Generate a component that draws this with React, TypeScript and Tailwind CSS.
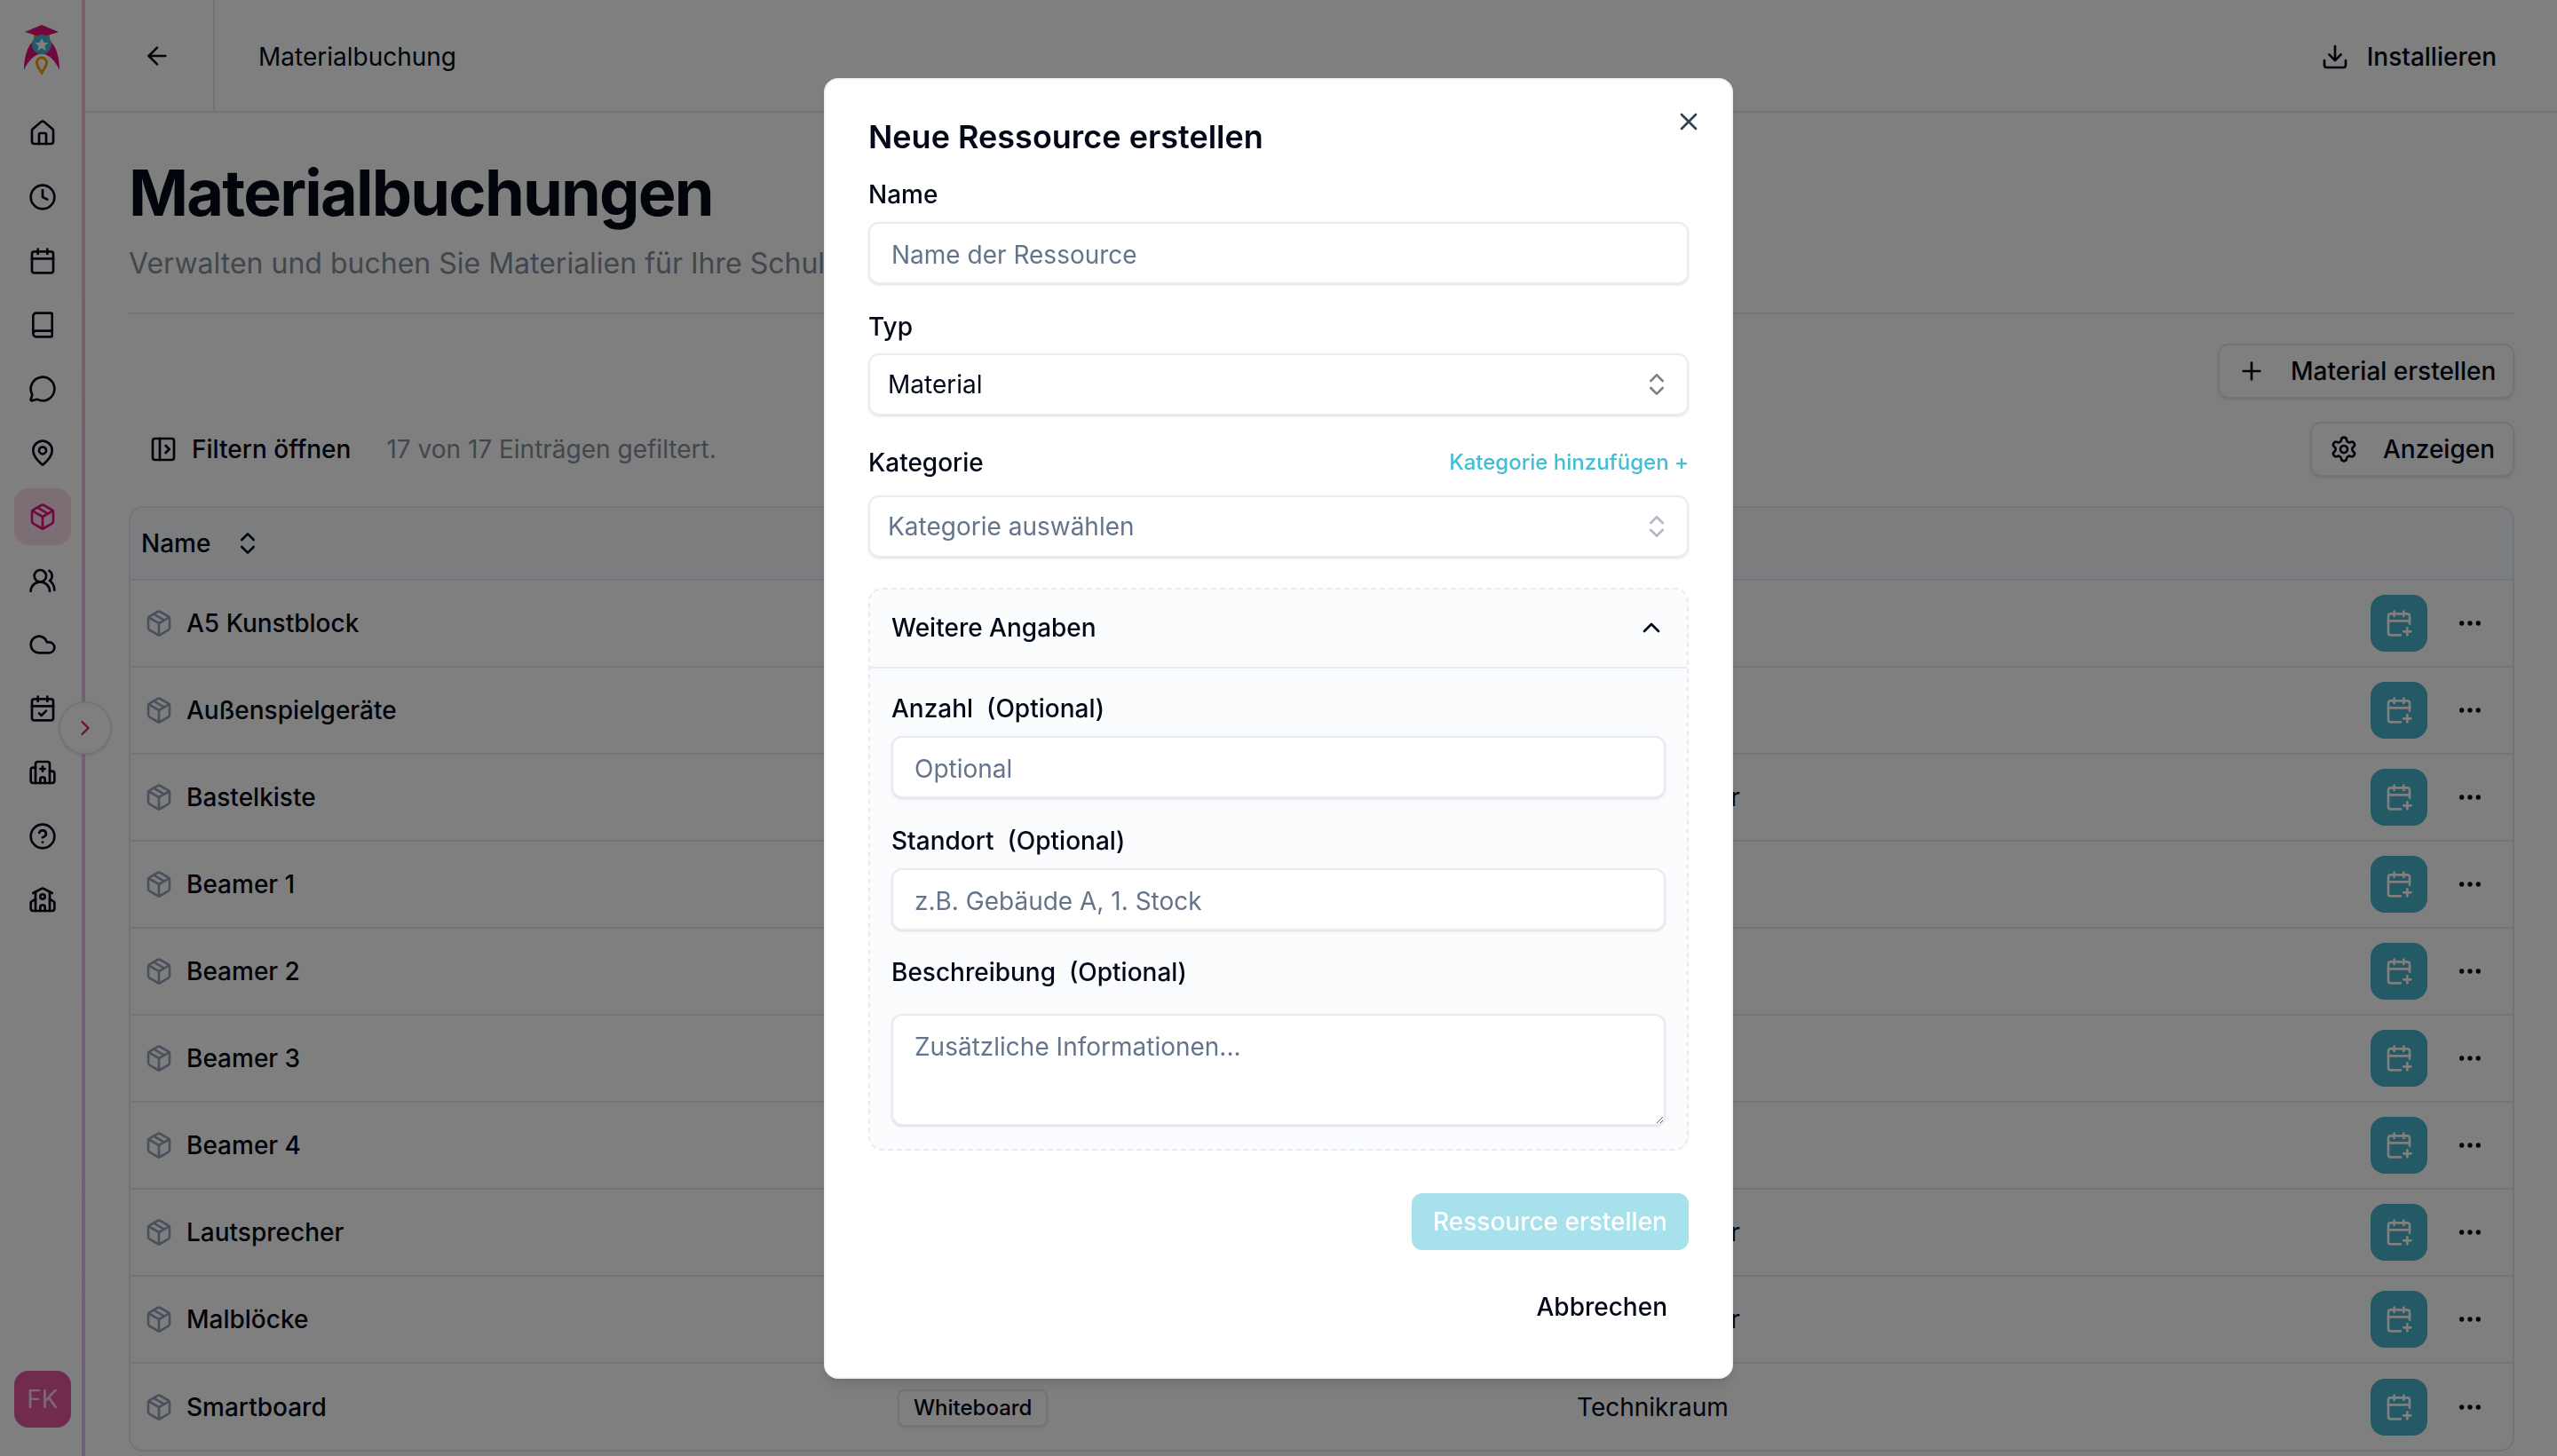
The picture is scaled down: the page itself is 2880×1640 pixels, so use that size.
import {
  ArrowLeft, Book, Calendar, CalendarCheck, CalendarPlus, ChevronRight, ChevronUp, ChevronsUpDown, CircleHelp, Clock,
  Cloud, Download, Ellipsis, Home, Hospital, MapPin, MessageCircle, Package, PanelLeftOpen, Plus, School, Settings, UsersRound, X,
} from 'lucide-react';

const navItems = [Home, Clock, Calendar, Book, MessageCircle, MapPin, Package, UsersRound, Cloud, CalendarCheck, Hospital, CircleHelp, School];

const rows = [
  { name: 'A5 Kunstblock' },
  { name: 'Außenspielgeräte' },
  { name: 'Bastelkiste', ort: 'Lehrerzimmer' },
  { name: 'Beamer 1' },
  { name: 'Beamer 2' },
  { name: 'Beamer 3' },
  { name: 'Beamer 4' },
  { name: 'Lautsprecher', ort: 'Lehrerzimmer' },
  { name: 'Malblöcke', ort: 'Lehrerzimmer' },
  { name: 'Smartboard', typ: 'Whiteboard', ort: 'Technikraum' },
];

function Logo() {
  return (
    <svg width="92" height="118" viewBox="0 0 92 118" className="shrink-0">
      <path d="M37 47 C30 53 27 66 27 79 C32 68 38 62 47 60 C56 62 62 68 67 79 C67 66 64 53 57 47 Z" fill="#e0107f" />
      <path d="M38 36 H56 V46 H38 Z" fill="#f59e0b" />
      <path d="M28 36 L47 28 L66 36 L47 42 Z" fill="#e0107f" />
      <circle cx="47" cy="50" r="11" fill="#3fb8d0" />
      <path d="M47 43 L49.2 47.8 L54.4 48.3 L50.5 51.8 L51.6 57 L47 54.3 L42.4 57 L43.5 51.8 L39.6 48.3 L44.8 47.8 Z" fill="#ffffff" />
      <path d="M47 82 C44 77 41.5 74 41.5 70.5 A5.5 5.5 0 0 1 52.5 70.5 C52.5 74 50 77 47 82 Z" fill="none" stroke="#f59e0b" strokeWidth="3" />
    </svg>
  );
}

function Sidebar() {
  return (
    <aside className="relative flex h-full w-[92px] shrink-0 flex-col">
      <Logo />
      <nav className="flex flex-col gap-2">
        {navItems.map((Icon, i) => (
          <div
            key={i}
            className={`ml-4 flex h-16 w-16 items-center justify-center rounded-2xl ${i === 6 ? 'bg-[#f7dde9] text-[#e0107f]' : 'text-[#020817]'}`}
          >
            <Icon size={32} />
          </div>
        ))}
      </nav>
      <div className="mt-auto mb-8 ml-4 flex h-16 w-16 items-center justify-center rounded-2xl bg-[#e0569b] text-[28px] text-[#f6d5e6]">
        FK
      </div>
    </aside>
  );
}

function Toolbar() {
  return (
    <>
      <div className="mt-[33px] flex justify-end">
        <button className="flex h-[62px] w-[334px] items-center rounded-xl border-2 border-[#e2e8f0] pl-5 text-[#020817] shadow-sm">
          <Plus size={32} />
          <span className="ml-[28px] text-[28px] font-medium">Material erstellen</span>
        </button>
      </div>
      <div className="mt-[26px] flex h-[62px] items-center">
        <PanelLeftOpen size={32} className="ml-[23px] text-[#020817]" />
        <span className="ml-[16px] text-[28px] font-medium text-[#020817]">Filtern öffnen</span>
        <span className="ml-[40px] text-[28px] text-[#848d9b]">17 von 17 Einträgen gefiltert.</span>
        <button className="ml-auto flex h-[62px] w-[230px] items-center rounded-xl border-2 border-[#e2e8f0] pl-[20px] text-[#020817] shadow-sm">
          <Settings size={32} />
          <span className="ml-[28px] text-[28px] font-medium">Anzeigen</span>
        </button>
      </div>
    </>
  );
}

function MaterialTable() {
  return (
    <div className="mt-[33px] overflow-hidden rounded-2xl border-2 border-[#e2e8f0]">
      <table className="w-full table-fixed border-collapse text-[28px] text-[#020817]">
        <thead className="bg-[#f8fafc]">
          <tr className="h-[81px] border-b-2 border-[#e2e8f0]">
            <th className="w-[848px] pl-3 text-left font-medium">
              <span className="flex items-center gap-[26px]">Name <ChevronsUpDown size={32} /></span>
            </th>
            <th className="w-[765px]" />
            <th />
            <th className="w-[160px]" />
          </tr>
        </thead>
        <tbody>
          {rows.map(r => (
            <tr key={r.name} className="h-[98px] border-b-2 border-[#e2e8f0] last:border-b-0">
              <td className="pl-4">
                <span className="flex items-center gap-[15px] font-medium">
                  <Package size={32} className="text-[#94a3b8]" />
                  {r.name}
                </span>
              </td>
              <td className="pl-4">
                {r.typ && (
                  <span className="inline-flex h-[42px] items-center rounded-lg border-2 border-[#e2e8f0] px-4 text-2xl font-medium shadow-sm">{r.typ}</span>
                )}
              </td>
              <td className="pl-4">{r.ort}</td>
              <td>
                <div className="flex items-center">
                  <button className="flex h-16 w-16 items-center justify-center rounded-2xl bg-[#46b4cc] text-white">
                    <CalendarPlus size={32} />
                  </button>
                  <Ellipsis size={32} className="ml-8" />
                </div>
              </td>
            </tr>
          ))}
        </tbody>
      </table>
    </div>
  );
}

const inputCls =
  'block w-full rounded-xl border-2 border-[#e8ecf1] bg-white px-6 text-[28px] shadow-sm outline-none placeholder:text-[#64748b]';

function Label({ text, optional }: { text: string; optional?: boolean }) {
  return (
    <label className="block h-9 text-[28px] leading-9 font-medium whitespace-pre text-[#020817]">
      {text}{optional ? '  (Optional)' : ''}
    </label>
  );
}

function Dialog() {
  return (
    <div className="fixed inset-0 flex items-center justify-center bg-black/50">
      <div className="relative h-[1465px] w-[1024px] rounded-2xl border-2 border-[#f1f5f9] bg-white px-12 pt-[42px] shadow-lg">
        <X size={32} className="absolute top-[31px] right-[32px] text-[#334155]" />
        <h2 className="h-11 text-4xl leading-11 font-semibold text-[#020817]">Neue Ressource erstellen</h2>

        <div className="mt-[25px]"><Label text="Name" /></div>
        <input readOnly placeholder="Name der Ressource" className={`${inputCls} mt-[13px] h-[70px] pt-1`} />

        <div className="mt-[30px]"><Label text="Typ" /></div>
        <div className="mt-3 flex h-[70px] items-center justify-between rounded-xl border-2 border-[#e8ecf1] pr-[18px] pl-5 text-[28px] text-[#020817] shadow-sm">
          Material
          <ChevronsUpDown size={32} className="opacity-50" />
        </div>

        <div className="mt-[35px] flex items-center justify-between">
          <Label text="Kategorie" />
          <span className="text-2xl font-medium text-[#45bdd4]">Kategorie hinzufügen +</span>
        </div>
        <div className="mt-[19px] flex h-[70px] items-center justify-between rounded-xl border-2 border-[#e8ecf1] pr-[18px] pl-5 text-[28px] text-[#64748b] shadow-sm">
          Kategorie auswählen
          <ChevronsUpDown size={32} className="opacity-50" />
        </div>

        <div className="mt-[34px] h-[634px] rounded-2xl border-2 border-dashed border-[#e8ecf1] bg-[#fbfcfe]">
          <div className="flex h-[89px] items-center justify-between border-b-2 border-[#e8ecf1] pr-6 pl-6 text-[28px] font-medium text-[#020817]">
            Weitere Angaben
            <ChevronUp size={32} />
          </div>
          <div className="px-6 pt-[27px]">
            <Label text="Anzahl" optional />
            <input readOnly placeholder="Optional" className={`${inputCls} mt-[13px] h-[70px] pt-1`} />
            <div className="mt-[30px]"><Label text="Standort" optional /></div>
            <input readOnly placeholder="z.B. Gebäude A, 1. Stock" className={`${inputCls} mt-[13px] h-[70px] pt-1`} />
            <div className="mt-[29px]"><Label text="Beschreibung" optional /></div>
            <textarea readOnly placeholder="Zusätzliche Informationen..." className={`${inputCls} mt-[29px] h-[126px] resize-y py-[14px]`} />
          </div>
        </div>

        <div className="mt-12 flex justify-end">
          <button className="h-16 w-[312px] rounded-xl bg-[#a6e1ec] text-[28px] font-medium text-white">Ressource erstellen</button>
        </div>
        <div className="mt-8 flex justify-end">
          <button className="h-16 px-6 text-[28px] font-medium text-[#020817]">Abbrechen</button>
        </div>
      </div>
    </div>
  );
}

export default function App() {
  return (
    <div className="flex h-screen w-screen overflow-hidden bg-white font-['Inter',sans-serif]">
      <Sidebar />
      <div className="h-full w-1 shrink-0 bg-gradient-to-b from-[#f5c0d8] to-[#d8c0ec]" />

      <main className="min-w-0 flex-1">
        <header className="flex h-[127px] items-center border-b-2 border-[#e2e8f0] text-[28px] text-[#020817]">
          <div className="flex h-full w-[146px] items-center justify-center border-r-2 border-[#e2e8f0] pl-[18px]">
            <ArrowLeft size={32} />
          </div>
          <span className="ml-[49px] pt-[2px]">Materialbuchung</span>
          <span className="mr-[68px] ml-auto flex items-center gap-[20px] pt-[2px] font-medium">
            <Download size={32} />
            Installieren
          </span>
        </header>

        <section className="pr-12 pl-[49px]">
          <h1 className="mt-[50px] h-20 text-[72px] leading-20 font-bold tracking-tight text-[#020817]">Materialbuchungen</h1>
          <p className="mt-[18px] text-[32px] leading-11 text-[#848d9b]">Verwalten und buchen Sie Materialien für Ihre Schule.</p>
          <div className="mt-[33px] border-b-2 border-[#e2e8f0]" />
          <Toolbar />
          <MaterialTable />
        </section>
      </main>

      <button className="fixed top-[790px] left-[66px] flex h-[60px] w-[60px] items-center justify-center rounded-full border-2 border-[#e2e8f0] bg-white text-[#e11d6b] shadow-sm">
        <ChevronRight size={28} />
      </button>
      <Dialog />
    </div>
  );
}
